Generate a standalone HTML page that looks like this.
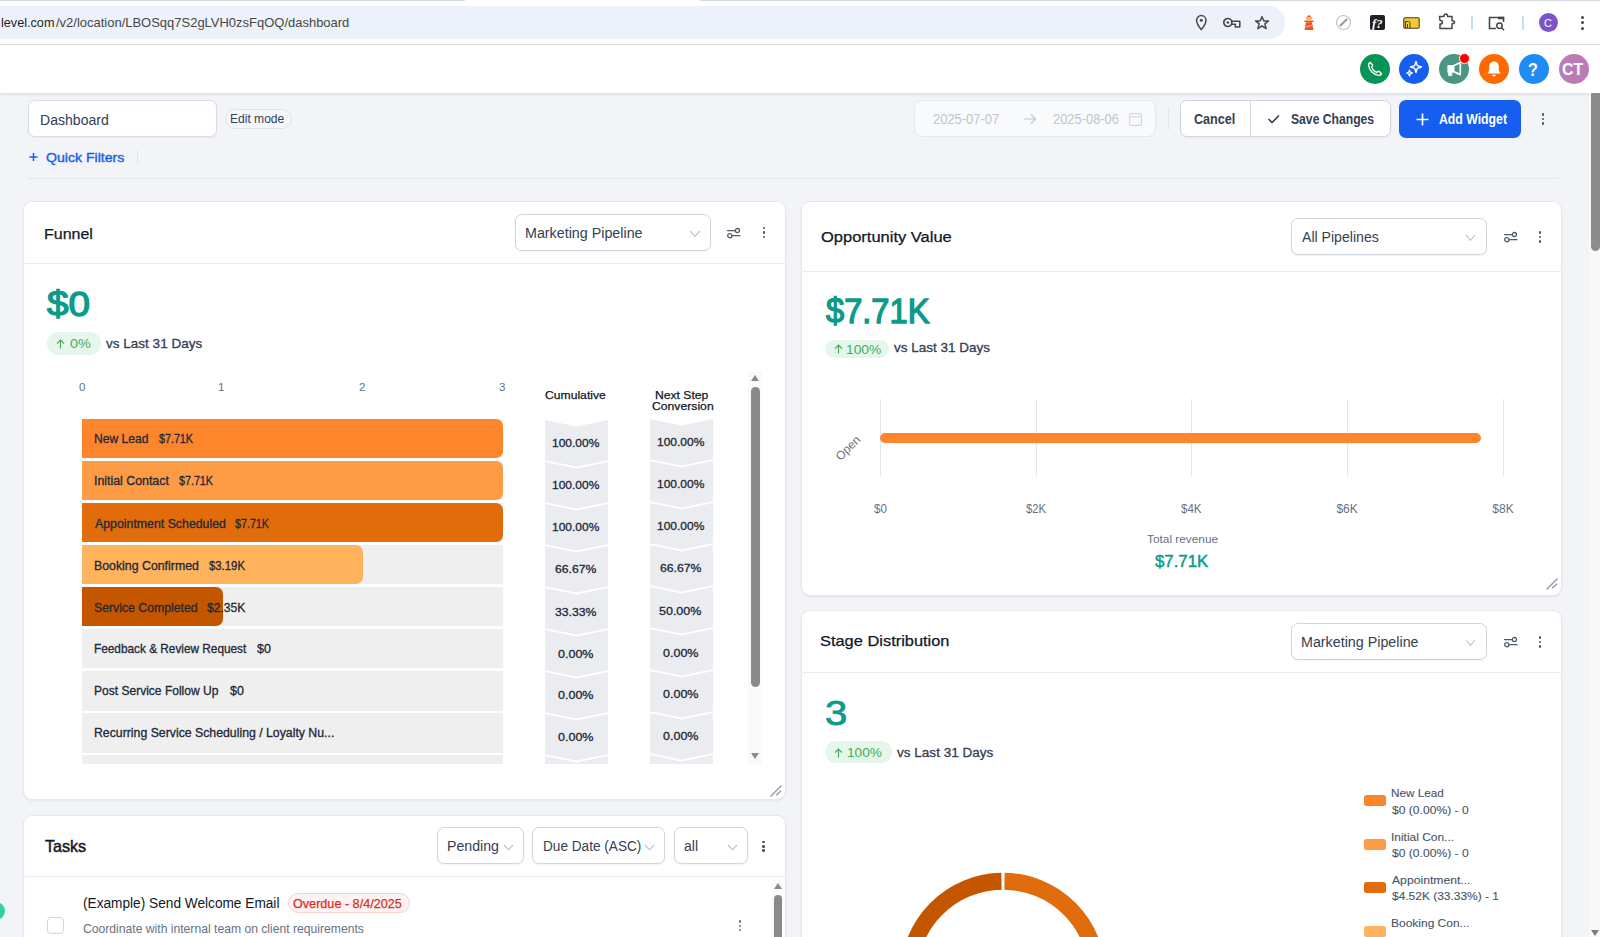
<!DOCTYPE html>
<html><head><meta charset="utf-8">
<style>
*{box-sizing:border-box;margin:0;padding:0}
html,body{width:1600px;height:937px;overflow:hidden}
body{position:relative;background:#f2f4f8;font-family:"Liberation Sans",sans-serif;color:#101828}
.a{position:absolute}
.t{position:absolute;white-space:nowrap;line-height:1}
.circ{position:absolute;width:30px;height:30px;border-radius:50%}
.card{position:absolute;background:#fff;border-radius:8px;box-shadow:0 0 0 1px #e4e7ec,0 1px 3px rgba(16,24,40,.13)}
.dd{position:absolute;border:1px solid #d0d5dd;border-radius:7px;background:#fff;box-shadow:0 1px 2px rgba(16,24,40,.06)}
.keb{position:absolute;width:3px}
.keb i{display:block;width:3px;height:3px;border-radius:50%;background:#475467;margin-bottom:2px}
</style></head><body>
<div class="a" style="left:0;top:0;width:1600px;height:45px;background:#fff"></div><div class="a" style="left:0;top:0;width:465px;height:1px;background:#d6dae0"></div><div class="a" style="left:700px;top:0;width:900px;height:1px;background:#d6dae0"></div><div class="a" style="left:0;top:44px;width:1600px;height:1px;background:#e1e3e6"></div><div class="a" style="left:0;top:6px;width:1285px;height:32.5px;background:#edf2fa;border-radius:0 16px 16px 0"></div><div class="t" style="left:0.50px;top:15.87px;font-size:13.15px;color:#1f1f1f;transform:scaleX(0.9630);transform-origin:0 0;">level.com</div><div class="t" style="left:56.00px;top:15.87px;font-size:13.15px;color:#474747;transform:scaleX(0.9874);transform-origin:0 0;">/v2/location/LBOSqq7S2gLVH0zsFqOQ/dashboard</div>
<svg class="a" style="left:1195px;top:14px" width="13" height="17" viewBox="0 0 13 17"><path d="M6.3 15.6C6.3 15.6 1.6 10.2 1.6 6.3A4.7 4.7 0 0 1 11 6.3C11 10.2 6.3 15.6 6.3 15.6Z" fill="none" stroke="#474747" stroke-width="1.5" stroke-linejoin="round"/><circle cx="6.3" cy="6.2" r="1.5" fill="#474747"/></svg>
<svg class="a" style="left:1222px;top:16px" width="20" height="14" viewBox="0 0 20 14"><circle cx="5.8" cy="6.5" r="4" fill="none" stroke="#474747" stroke-width="1.7"/><circle cx="5.8" cy="6.5" r="1.3" fill="#474747"/><path d="M9.8 5.3H17.2Q17.8 5.3 17.8 5.9V10.4Q17.8 11 17.2 11H13.3V8.2H9.8" fill="none" stroke="#474747" stroke-width="1.6" stroke-linejoin="round"/></svg>
<svg class="a" style="left:1254px;top:14.8px" width="16" height="16" viewBox="0 0 16 16"><path d="M8 1.8L9.9 6H14.5L10.8 8.9L12.2 13.6L8 10.8L3.8 13.6L5.2 8.9L1.5 6H6.1Z" fill="none" stroke="#474747" stroke-width="1.5" stroke-linejoin="round"/></svg>
<svg class="a" style="left:1302px;top:14px" width="14" height="17" viewBox="0 0 14 17"><path d="M7 0.8L9.5 3.5V5.5H4.5V3.5Z" fill="#f4511e"/><rect x="5.3" y="3.2" width="3.4" height="2.2" fill="#ffd740"/><path d="M2.5 6.5H11.5V8H2.5Z" fill="#f4511e"/><path d="M4 8.3H10L11.5 16H2.5Z" fill="#f4511e"/><path d="M3.5 12.5L10.5 10.5V11.8L3.3 13.8Z" fill="#ffab91"/></svg>
<svg class="a" style="left:1335px;top:14px" width="17" height="17" viewBox="0 0 17 17"><circle cx="8.5" cy="8.5" r="7" fill="none" stroke="#c4c4c4" stroke-width="1.2"/><path d="M5.5 11.5L11.5 5.5" stroke="#9e9e9e" stroke-width="2.2" stroke-linecap="round"/></svg>
<div class="a" style="left:1370px;top:15px;width:15px;height:15px;background:#202124;border-radius:2px"></div>
<svg class="a" style="left:1403px;top:17px" width="17" height="12" viewBox="0 0 17 12"><rect x="0.8" y="0.8" width="15.4" height="10.4" rx="1.2" fill="#f9c933" stroke="#3c3c3c" stroke-width="1.1"/><path d="M2.5 11V4.5H5.5C6.5 4.5 7 5 7 6V11M4.5 11V7" fill="none" stroke="#3c3c3c" stroke-width="1"/></svg>
<svg class="a" style="left:1438px;top:13px" width="18" height="17" viewBox="0 0 18 17"><path d="M1.5 3.5H6C6 2 6.8 1 7.8 1S9.6 2 9.6 3.5H14V7.8C15.5 7.8 16.5 8.5 16.5 9.3S15.5 10.8 14 10.8V15.5H2V11C3.5 11 4.5 10.2 4.5 9.2S3.5 7.5 2 7.5Z" fill="none" stroke="#474747" stroke-width="1.5" stroke-linejoin="round"/></svg>
<div class="a" style="left:1471px;top:16px;width:2px;height:14px;background:#c7dbf7"></div>
<svg class="a" style="left:1488px;top:15px" width="18" height="16" viewBox="0 0 18 16"><path d="M8 13.5H1.5V2.5H15.5V7" fill="none" stroke="#474747" stroke-width="1.6"/><rect x="10" y="1.8" width="6.2" height="2.5" fill="#474747"/><circle cx="11.5" cy="10.8" r="2.7" fill="none" stroke="#474747" stroke-width="1.5"/><path d="M13.5 12.8L16 15.3" stroke="#474747" stroke-width="1.6"/></svg>
<div class="a" style="left:1522px;top:16px;width:2px;height:14px;background:#c7dbf7"></div>
<div class="a" style="left:1538.5px;top:13px;width:19px;height:19px;border-radius:50%;background:#7b55c7"></div>
<div class="t" style="left:1372.00px;top:16.99px;font-size:13px;color:#fff;font-weight:bold;font-style:italic;font-family:'Liberation Serif',serif;transform:scaleX(0.9710);transform-origin:0 0;">f?</div><div class="t" style="left:1544.00px;top:17.72px;font-size:10.96px;color:#fff;">C</div><div class="a" style="left:1580.50px;top:16.00px;width:3px;height:3px;border-radius:50%;background:#474747"></div><div class="a" style="left:1580.50px;top:21.25px;width:3px;height:3px;border-radius:50%;background:#474747"></div><div class="a" style="left:1580.50px;top:26.50px;width:3px;height:3px;border-radius:50%;background:#474747"></div><div class="a" style="left:0;top:45px;width:1600px;height:48px;background:#fff;box-shadow:0 1px 4px rgba(16,24,40,.12)"></div><div class="circ" style="left:1359.8px;top:54px;background:#079455"></div><div class="circ" style="left:1399.3px;top:54px;background:#155eef"></div><div class="circ" style="left:1439.0px;top:54px;background:#4b9682"></div><div class="circ" style="left:1479.0px;top:54px;background:#ff6a00"></div><div class="circ" style="left:1519.0px;top:54px;background:#1e8cf4"></div><div class="circ" style="left:1558.7px;top:54px;background:#b97cb8"></div>
<svg class="a" style="left:1367px;top:61px" width="16" height="16" viewBox="0 0 16 16"><path d="M3.2 1.5C2.3 1.8 1.5 2.8 1.6 4C2 9.5 6.5 14 12 14.4C13.2 14.5 14.2 13.7 14.5 12.8L12.3 10.6C11.8 10.2 11.2 10.3 10.8 10.6L9.8 11.5C7.5 10.5 5.5 8.5 4.5 6.2L5.4 5.2C5.7 4.8 5.8 4.2 5.4 3.7Z" fill="none" stroke="#fff" stroke-width="1.4" stroke-linejoin="round"/></svg>
<svg class="a" style="left:1405px;top:60px" width="18" height="18" viewBox="0 0 18 18"><path d="M11 1.5L12.3 5.7L16.5 7L12.3 8.3L11 12.5L9.7 8.3L5.5 7L9.7 5.7Z" fill="none" stroke="#fff" stroke-width="1.4" stroke-linejoin="round"/><path d="M4.5 10L5.3 12.2L7.5 13L5.3 13.8L4.5 16L3.7 13.8L1.5 13L3.7 12.2Z" fill="none" stroke="#fff" stroke-width="1.3" stroke-linejoin="round"/></svg>
<svg class="a" style="left:1445px;top:60px" width="18" height="18" viewBox="0 0 18 18"><path d="M2.8 5.6H8.2V12.2H6.6L6.9 15.6H3.6L3.2 12.2H2.8Z" fill="#fff" stroke="#fff" stroke-width="0.8" stroke-linejoin="round"/><path d="M8.6 5.8L15.3 2.6V14.6L8.6 11.6Z" fill="#4b9682" stroke="#fff" stroke-width="1.7" stroke-linejoin="round"/></svg>
<div class="a" style="left:1458.7px;top:52.6px;width:11.4px;height:11.4px;border-radius:50%;background:#f00;border:1px solid #fff"></div>
<svg class="a" style="left:1486px;top:60px" width="16" height="18" viewBox="0 0 16 18"><path d="M8 1.5C5 1.5 3.2 3.8 3.2 6.8V10.5L1.5 13.5H14.5L12.8 10.5V6.8C12.8 3.8 11 1.5 8 1.5Z" fill="#fff"/><path d="M6 14.8A2 1.6 0 0 0 10 14.8Z" fill="#fff"/></svg>
<div class="t" style="left:1528.00px;top:61.92px;font-size:17.81px;color:#fff;font-weight:bold;transform:scaleX(0.9000);transform-origin:0 0;">?</div><div class="t" style="left:1562.00px;top:61.08px;font-size:16.44px;color:#fff;font-weight:bold;transform:scaleX(0.9602);transform-origin:0 0;">CT</div><div class="a" style="left:27.8px;top:100.2px;width:188.8px;height:37.2px;background:#fff;border:1px solid #d9dde4;border-radius:7px;box-shadow:0 1px 2px rgba(16,24,40,.05)"></div><div class="t" style="left:40.07px;top:111.84px;font-size:15.07px;color:#344054;transform:scaleX(0.9335);transform-origin:0 0;">Dashboard</div><div class="a" style="left:224.5px;top:109.3px;width:67.5px;height:20px;border:1px solid #dfe2e8;border-radius:10px;background:#f5f6f9"></div><div class="t" style="left:230.22px;top:112.96px;font-size:12.33px;color:#344054;transform:scaleX(0.9771);transform-origin:0 0;">Edit mode</div><svg class="a" style="left:29px;top:152px" width="9" height="10" viewBox="0 0 9 10"><path d="M4.5 1V9M0.5 5H8.5" stroke="#155eef" stroke-width="1.5"/></svg><div class="t" style="left:45.60px;top:151.12px;font-size:13.56px;color:#155eef;transform:scaleX(1.0411);transform-origin:0 0;-webkit-text-stroke:0.4px #155eef;">Quick Filters</div><div class="a" style="left:137px;top:150px;width:1px;height:14px;background:#e1e4ea"></div><div class="a" style="left:28px;top:178px;width:1530px;height:1px;background:#e3e6ec"></div><div class="a" style="left:913.8px;top:100.3px;width:242px;height:37.2px;background:#f9fafb;border:1px solid #e6e8ed;border-radius:8px"></div><div class="t" style="left:933.40px;top:111.73px;font-size:14.25px;color:#c1c5cc;transform:scaleX(0.9086);transform-origin:0 0;">2025-07-07</div><svg class="a" style="left:1023px;top:113px" width="14" height="12" viewBox="0 0 14 12"><path d="M1 6H12.5M8 1.5L12.5 6L8 10.5" fill="none" stroke="#c1c5cc" stroke-width="1.1"/></svg><div class="t" style="left:1053.00px;top:111.73px;font-size:14.25px;color:#c1c5cc;transform:scaleX(0.9045);transform-origin:0 0;">2025-08-06</div><svg class="a" style="left:1128.5px;top:112.5px" width="13" height="13" viewBox="0 0 13 13"><rect x="0.6" y="0.6" width="11.8" height="11.8" rx="1.5" fill="none" stroke="#d3d6dc" stroke-width="1.1"/><path d="M0.6 3.8H12.4" stroke="#d3d6dc" stroke-width="1.1"/></svg><div class="a" style="left:1168px;top:108px;width:1px;height:22px;background:#e4e7ec"></div><div class="a" style="left:1180px;top:100px;width:211px;height:37px;background:#fff;border:1px solid #d0d5dd;border-radius:7px;box-shadow:0 1px 2px rgba(16,24,40,.05)"></div><div class="a" style="left:1250px;top:101px;width:1px;height:35px;background:#d0d5dd"></div><div class="t" style="left:1194.00px;top:111.65px;font-size:14.11px;color:#344054;font-weight:bold;transform:scaleX(0.8931);transform-origin:0 0;">Cancel</div><svg class="a" style="left:1266.5px;top:113px" width="14" height="12" viewBox="0 0 14 12"><path d="M1.5 6L5 9.5L12 2.5" fill="none" stroke="#344054" stroke-width="1.6"/></svg><div class="t" style="left:1291.00px;top:111.65px;font-size:14.11px;color:#344054;font-weight:bold;transform:scaleX(0.8617);transform-origin:0 0;">Save Changes</div><div class="a" style="left:1399px;top:100px;width:121.5px;height:37.5px;background:#155eef;border-radius:7px"></div><svg class="a" style="left:1415.5px;top:112.5px" width="13" height="13" viewBox="0 0 13 13"><path d="M6.5 0.5V12.5M0.5 6.5H12.5" stroke="#fff" stroke-width="1.7"/></svg><div class="t" style="left:1438.50px;top:111.65px;font-size:14.11px;color:#fff;font-weight:bold;transform:scaleX(0.8689);transform-origin:0 0;">Add Widget</div><div class="a" style="left:1541.85px;top:113.35px;width:2.5px;height:2.5px;border-radius:50%;background:#475467"></div><div class="a" style="left:1541.85px;top:117.80px;width:2.5px;height:2.5px;border-radius:50%;background:#475467"></div><div class="a" style="left:1541.85px;top:122.25px;width:2.5px;height:2.5px;border-radius:50%;background:#475467"></div><div class="a" style="left:1588.5px;top:93px;width:11.5px;height:844px;background:#f8f8f8"></div><div class="a" style="left:1591.3px;top:93px;width:8.7px;height:158px;background:#8c8c8c;border-radius:0 0 4.5px 4.5px"></div><div class="a" style="left:1591px;top:929.5px;width:0;height:0;border-left:4.5px solid transparent;border-right:4.5px solid transparent;border-top:6px solid #7a7a7a"></div><div class="a" style="left:-13px;top:902.3px;width:18px;height:18px;border-radius:50%;background:#32d296"></div><div class="card" style="left:24.3px;top:202px;width:760.5px;height:597px"></div><div class="a" style="left:24.3px;top:263px;width:760.5px;height:1px;background:#eaecf0"></div><div class="t" style="left:43.74px;top:225.64px;font-size:15.07px;color:#101828;transform:scaleX(1.0624);transform-origin:0 0;-webkit-text-stroke:0.25px #101828;">Funnel</div><div class="dd" style="left:514.5px;top:214px;width:196px;height:37.2px"></div><div class="t" style="left:524.82px;top:225.91px;font-size:14.52px;color:#344054;transform:scaleX(0.9844);transform-origin:0 0;">Marketing Pipeline</div><svg class="a" style="left:688.5px;top:229.5px" width="12.0" height="7.300000000000011" viewBox="0 0 12.0 7.300000000000011"><path d="M1 1L6.0 6.300000000000011L11.0 1" fill="none" stroke="#b9bec7" stroke-width="1.1"/></svg><svg class="a" style="left:726px;top:226.6px" width="16" height="13" viewBox="0 0 16 13"><path d="M1.5 3.6H9.5M5.5 8.65H14" stroke="#4d5b6b" stroke-width="1.3" stroke-linecap="round"/><circle cx="11.4" cy="3.6" r="2.1" fill="#fff" stroke="#4d5b6b" stroke-width="1.3"/><circle cx="3.8" cy="8.65" r="2.1" fill="#fff" stroke="#4d5b6b" stroke-width="1.3"/></svg><div class="a" style="left:762.65px;top:226.95px;width:2.5px;height:2.5px;border-radius:50%;background:#475467"></div><div class="a" style="left:762.65px;top:231.40px;width:2.5px;height:2.5px;border-radius:50%;background:#475467"></div><div class="a" style="left:762.65px;top:235.85px;width:2.5px;height:2.5px;border-radius:50%;background:#475467"></div><div class="t" style="left:47.40px;top:286.31px;font-size:35.07px;color:#0c9a89;transform:scaleX(1.1039);transform-origin:0 0;-webkit-text-stroke:1.35px #0c9a89;">$0</div><div class="a" style="left:47px;top:332px;width:54.2px;height:23px;border-radius:12px;background:#e6f6ea"></div><svg class="a" style="left:56px;top:338.5px" width="9" height="10" viewBox="0 0 9 10"><path d="M4.5 9.5V1.2M1 4.7L4.5 1.2 8 4.7" fill="none" stroke="#3fae5e" stroke-width="1.2"/></svg><div class="t" style="left:69.60px;top:338.44px;font-size:12.47px;color:#3fae5e;transform:scaleX(1.1542);transform-origin:0 0;">0%</div><div class="t" style="left:105.60px;top:336.87px;font-size:13.15px;color:#344054;transform:scaleX(1.0296);transform-origin:0 0;-webkit-text-stroke:0.3px currentColor;">vs Last 31 Days</div><div class="t" style="left:79.00px;top:381.85px;font-size:11.51px;color:#667085;">0</div><div class="t" style="left:218.00px;top:381.85px;font-size:11.51px;color:#667085;">1</div><div class="t" style="left:359.00px;top:381.85px;font-size:11.51px;color:#667085;">2</div><div class="t" style="left:499.00px;top:381.85px;font-size:11.51px;color:#667085;">3</div><div class="t" style="left:545.00px;top:389.14px;font-size:11.64px;color:#101828;transform:scaleX(1.0454);transform-origin:0 0;-webkit-text-stroke:0.25px #101828;">Cumulative</div><div class="t" style="left:655.00px;top:389.14px;font-size:11.64px;color:#101828;transform:scaleX(1.0439);transform-origin:0 0;-webkit-text-stroke:0.25px #101828;">Next Step</div><div class="t" style="left:652.00px;top:400.14px;font-size:11.64px;color:#101828;transform:scaleX(1.0491);transform-origin:0 0;-webkit-text-stroke:0.25px #101828;">Conversion</div><div class="a" style="left:0;top:0;width:1600px;height:764px;overflow:hidden"><div class="a" style="left:82.2px;top:418.50px;width:421px;height:39.6px;background:#efefef"></div><div class="a" style="left:82.2px;top:418.50px;width:421.0px;height:39.6px;background:#fd862c;border-radius:0 7px 7px 0"></div><div class="t" style="left:94.00px;top:434.31px;font-size:11.92px;color:#1d2939;transform:scaleX(1.0143);transform-origin:0 0;-webkit-text-stroke:0.3px currentColor;">New Lead</div><div class="t" style="left:158.90px;top:434.31px;font-size:11.92px;color:#1d2939;transform:scaleX(0.8996);transform-origin:0 0;-webkit-text-stroke:0.3px currentColor;">$7.71K</div><svg class="a" style="left:545.1px;top:419.50px" width="63" height="47" viewBox="0 0 63 47"><path d="M0 0L31.5 6.5L63 0V40.2L31.5 46.4L0 40.2Z" fill="#eaecf0"/></svg><div class="t" style="left:552.20px;top:436.94px;font-size:11.64px;color:#1d2939;transform:scaleX(1.0317);transform-origin:0 0;-webkit-text-stroke:0.3px currentColor;">100.00%</div><svg class="a" style="left:650px;top:418.50px" width="63" height="47" viewBox="0 0 63 47"><path d="M0 0L31.5 6.5L63 0V40.2L31.5 46.4L0 40.2Z" fill="#eaecf0"/></svg><div class="t" style="left:657.00px;top:435.94px;font-size:11.64px;color:#1d2939;transform:scaleX(1.0317);transform-origin:0 0;-webkit-text-stroke:0.3px currentColor;">100.00%</div><div class="a" style="left:82.2px;top:460.58px;width:421px;height:39.6px;background:#efefef"></div><div class="a" style="left:82.2px;top:460.58px;width:421.0px;height:39.6px;background:#fe9b45;border-radius:0 7px 7px 0"></div><div class="t" style="left:93.96px;top:476.47px;font-size:11.92px;color:#1d2939;transform:scaleX(1.0372);transform-origin:0 0;-webkit-text-stroke:0.3px currentColor;">Initial Contact</div><div class="t" style="left:179.40px;top:476.47px;font-size:11.92px;color:#1d2939;transform:scaleX(0.8996);transform-origin:0 0;-webkit-text-stroke:0.3px currentColor;">$7.71K</div><svg class="a" style="left:545.1px;top:461.58px" width="63" height="47" viewBox="0 0 63 47"><path d="M0 0L31.5 6.5L63 0V40.2L31.5 46.4L0 40.2Z" fill="#eaecf0"/></svg><div class="t" style="left:552.20px;top:479.10px;font-size:11.64px;color:#1d2939;transform:scaleX(1.0317);transform-origin:0 0;-webkit-text-stroke:0.3px currentColor;">100.00%</div><svg class="a" style="left:650px;top:460.58px" width="63" height="47" viewBox="0 0 63 47"><path d="M0 0L31.5 6.5L63 0V40.2L31.5 46.4L0 40.2Z" fill="#eaecf0"/></svg><div class="t" style="left:657.00px;top:478.10px;font-size:11.64px;color:#1d2939;transform:scaleX(1.0317);transform-origin:0 0;-webkit-text-stroke:0.3px currentColor;">100.00%</div><div class="a" style="left:82.2px;top:502.66px;width:421px;height:39.6px;background:#efefef"></div><div class="a" style="left:82.2px;top:502.66px;width:421.0px;height:39.6px;background:#e06c0b;border-radius:0 7px 7px 0"></div><div class="t" style="left:95.00px;top:518.63px;font-size:11.92px;color:#1d2939;transform:scaleX(1.0353);transform-origin:0 0;-webkit-text-stroke:0.3px currentColor;">Appointment Scheduled</div><div class="t" style="left:234.90px;top:518.63px;font-size:11.92px;color:#1d2939;transform:scaleX(0.8996);transform-origin:0 0;-webkit-text-stroke:0.3px currentColor;">$7.71K</div><svg class="a" style="left:545.1px;top:503.66px" width="63" height="47" viewBox="0 0 63 47"><path d="M0 0L31.5 6.5L63 0V40.2L31.5 46.4L0 40.2Z" fill="#eaecf0"/></svg><div class="t" style="left:552.20px;top:521.26px;font-size:11.64px;color:#1d2939;transform:scaleX(1.0317);transform-origin:0 0;-webkit-text-stroke:0.3px currentColor;">100.00%</div><svg class="a" style="left:650px;top:502.66px" width="63" height="47" viewBox="0 0 63 47"><path d="M0 0L31.5 6.5L63 0V40.2L31.5 46.4L0 40.2Z" fill="#eaecf0"/></svg><div class="t" style="left:657.00px;top:520.26px;font-size:11.64px;color:#1d2939;transform:scaleX(1.0317);transform-origin:0 0;-webkit-text-stroke:0.3px currentColor;">100.00%</div><div class="a" style="left:82.2px;top:544.74px;width:421px;height:39.6px;background:#efefef"></div><div class="a" style="left:82.2px;top:544.74px;width:281.0px;height:39.6px;background:#feb35c;border-radius:0 7px 7px 0"></div><div class="t" style="left:94.00px;top:560.79px;font-size:11.92px;color:#1d2939;transform:scaleX(1.0359);transform-origin:0 0;-webkit-text-stroke:0.3px currentColor;">Booking Confirmed</div><div class="t" style="left:208.90px;top:560.79px;font-size:11.92px;color:#1d2939;transform:scaleX(0.9525);transform-origin:0 0;-webkit-text-stroke:0.3px currentColor;">$3.19K</div><svg class="a" style="left:545.1px;top:545.74px" width="63" height="47" viewBox="0 0 63 47"><path d="M0 0L31.5 6.5L63 0V40.2L31.5 46.4L0 40.2Z" fill="#eaecf0"/></svg><div class="t" style="left:555.20px;top:563.42px;font-size:11.64px;color:#1d2939;transform:scaleX(1.0488);transform-origin:0 0;-webkit-text-stroke:0.3px currentColor;">66.67%</div><svg class="a" style="left:650px;top:544.74px" width="63" height="47" viewBox="0 0 63 47"><path d="M0 0L31.5 6.5L63 0V40.2L31.5 46.4L0 40.2Z" fill="#eaecf0"/></svg><div class="t" style="left:660.00px;top:562.42px;font-size:11.64px;color:#1d2939;transform:scaleX(1.0488);transform-origin:0 0;-webkit-text-stroke:0.3px currentColor;">66.67%</div><div class="a" style="left:82.2px;top:586.82px;width:421px;height:39.6px;background:#efefef"></div><div class="a" style="left:82.2px;top:586.82px;width:141.0px;height:39.6px;background:#c55600;border-radius:0 7px 7px 0"></div><div class="t" style="left:94.00px;top:602.95px;font-size:11.92px;color:#1d2939;transform:scaleX(1.0304);transform-origin:0 0;-webkit-text-stroke:0.3px currentColor;">Service Completed</div><div class="t" style="left:207.40px;top:602.95px;font-size:11.92px;color:#1d2939;transform:scaleX(1.0187);transform-origin:0 0;-webkit-text-stroke:0.3px currentColor;">$2.35K</div><svg class="a" style="left:545.1px;top:587.82px" width="63" height="47" viewBox="0 0 63 47"><path d="M0 0L31.5 6.5L63 0V40.2L31.5 46.4L0 40.2Z" fill="#eaecf0"/></svg><div class="t" style="left:555.20px;top:605.58px;font-size:11.64px;color:#1d2939;transform:scaleX(1.0488);transform-origin:0 0;-webkit-text-stroke:0.3px currentColor;">33.33%</div><svg class="a" style="left:650px;top:586.82px" width="63" height="47" viewBox="0 0 63 47"><path d="M0 0L31.5 6.5L63 0V40.2L31.5 46.4L0 40.2Z" fill="#eaecf0"/></svg><div class="t" style="left:659.00px;top:604.58px;font-size:11.64px;color:#1d2939;transform:scaleX(1.0744);transform-origin:0 0;-webkit-text-stroke:0.3px currentColor;">50.00%</div><div class="a" style="left:82.2px;top:628.90px;width:421px;height:39.6px;background:#efefef"></div><div class="t" style="left:94.00px;top:644.11px;font-size:11.92px;color:#1d2939;transform:scaleX(0.9920);transform-origin:0 0;-webkit-text-stroke:0.3px currentColor;">Feedback &amp; Review Request</div><div class="t" style="left:257.40px;top:644.11px;font-size:11.92px;color:#1d2939;transform:scaleX(1.0461);transform-origin:0 0;-webkit-text-stroke:0.3px currentColor;">$0</div><svg class="a" style="left:545.1px;top:629.90px" width="63" height="47" viewBox="0 0 63 47"><path d="M0 0L31.5 6.5L63 0V40.2L31.5 46.4L0 40.2Z" fill="#eaecf0"/></svg><div class="t" style="left:558.10px;top:647.74px;font-size:11.64px;color:#1d2939;transform:scaleX(1.0758);transform-origin:0 0;-webkit-text-stroke:0.3px currentColor;">0.00%</div><svg class="a" style="left:650px;top:628.90px" width="63" height="47" viewBox="0 0 63 47"><path d="M0 0L31.5 6.5L63 0V40.2L31.5 46.4L0 40.2Z" fill="#eaecf0"/></svg><div class="t" style="left:662.90px;top:646.74px;font-size:11.64px;color:#1d2939;transform:scaleX(1.0758);transform-origin:0 0;-webkit-text-stroke:0.3px currentColor;">0.00%</div><div class="a" style="left:82.2px;top:670.98px;width:421px;height:39.6px;background:#efefef"></div><div class="t" style="left:94.00px;top:686.27px;font-size:11.92px;color:#1d2939;transform:scaleX(1.0105);transform-origin:0 0;-webkit-text-stroke:0.3px currentColor;">Post Service Follow Up</div><div class="t" style="left:229.90px;top:686.27px;font-size:11.92px;color:#1d2939;transform:scaleX(1.0461);transform-origin:0 0;-webkit-text-stroke:0.3px currentColor;">$0</div><svg class="a" style="left:545.1px;top:671.98px" width="63" height="47" viewBox="0 0 63 47"><path d="M0 0L31.5 6.5L63 0V40.2L31.5 46.4L0 40.2Z" fill="#eaecf0"/></svg><div class="t" style="left:558.10px;top:688.90px;font-size:11.64px;color:#1d2939;transform:scaleX(1.0758);transform-origin:0 0;-webkit-text-stroke:0.3px currentColor;">0.00%</div><svg class="a" style="left:650px;top:670.98px" width="63" height="47" viewBox="0 0 63 47"><path d="M0 0L31.5 6.5L63 0V40.2L31.5 46.4L0 40.2Z" fill="#eaecf0"/></svg><div class="t" style="left:662.90px;top:687.90px;font-size:11.64px;color:#1d2939;transform:scaleX(1.0758);transform-origin:0 0;-webkit-text-stroke:0.3px currentColor;">0.00%</div><div class="a" style="left:82.2px;top:713.06px;width:421px;height:39.6px;background:#efefef"></div><div class="t" style="left:94.00px;top:728.43px;font-size:11.92px;color:#1d2939;transform:scaleX(1.0316);transform-origin:0 0;-webkit-text-stroke:0.3px currentColor;">Recurring Service Scheduling / Loyalty Nu...</div><svg class="a" style="left:545.1px;top:714.06px" width="63" height="47" viewBox="0 0 63 47"><path d="M0 0L31.5 6.5L63 0V40.2L31.5 46.4L0 40.2Z" fill="#eaecf0"/></svg><div class="t" style="left:558.10px;top:731.06px;font-size:11.64px;color:#1d2939;transform:scaleX(1.0758);transform-origin:0 0;-webkit-text-stroke:0.3px currentColor;">0.00%</div><svg class="a" style="left:650px;top:713.06px" width="63" height="47" viewBox="0 0 63 47"><path d="M0 0L31.5 6.5L63 0V40.2L31.5 46.4L0 40.2Z" fill="#eaecf0"/></svg><div class="t" style="left:662.90px;top:730.06px;font-size:11.64px;color:#1d2939;transform:scaleX(1.0758);transform-origin:0 0;-webkit-text-stroke:0.3px currentColor;">0.00%</div><div class="a" style="left:82.2px;top:755.14px;width:421px;height:39.6px;background:#efefef"></div><svg class="a" style="left:545.1px;top:756.14px" width="63" height="47" viewBox="0 0 63 47"><path d="M0 0L31.5 6.5L63 0V40.2L31.5 46.4L0 40.2Z" fill="#eaecf0"/></svg><svg class="a" style="left:650px;top:755.14px" width="63" height="47" viewBox="0 0 63 47"><path d="M0 0L31.5 6.5L63 0V40.2L31.5 46.4L0 40.2Z" fill="#eaecf0"/></svg></div><div class="a" style="left:748px;top:372px;width:14px;height:392px;background:#fafafa"></div><div class="a" style="left:750.5px;top:375.3px;width:0;height:0;border-left:4.5px solid transparent;border-right:4.5px solid transparent;border-bottom:6px solid #8a8a8a"></div><div class="a" style="left:750.5px;top:386.8px;width:9px;height:300px;background:#8a8a8a;border-radius:4.5px"></div><div class="a" style="left:750.5px;top:753.3px;width:0;height:0;border-left:4.5px solid transparent;border-right:4.5px solid transparent;border-top:6px solid #8a8a8a"></div><svg class="a" style="left:769px;top:784px" width="14" height="14" viewBox="0 0 14 14"><path d="M1.5 12.5L12.5 1.5M7.3 11.2L12 6.7" stroke="#8d96a5" stroke-width="1.25"/></svg><div class="card" style="left:24px;top:816.2px;width:761px;height:200px"></div><div class="a" style="left:24px;top:876.3px;width:761px;height:1px;background:#eaecf0"></div><div class="t" style="left:44.50px;top:838.66px;font-size:15.75px;color:#101828;transform:scaleX(1.0214);transform-origin:0 0;-webkit-text-stroke:0.45px #101828;">Tasks</div><div class="dd" style="left:436.75px;top:827.4px;width:87.25px;height:37.1px"></div><div class="t" style="left:447.16px;top:838.24px;font-size:15.07px;color:#344054;transform:scaleX(0.9388);transform-origin:0 0;">Pending</div><svg class="a" style="left:503px;top:844px" width="11" height="6.7999999999999545" viewBox="0 0 11 6.7999999999999545"><path d="M1 1L5.5 5.7999999999999545L10 1" fill="none" stroke="#b9bec7" stroke-width="1.1"/></svg><div class="dd" style="left:532.4px;top:827.4px;width:132.60px;height:37.1px"></div><div class="t" style="left:542.50px;top:838.24px;font-size:15.07px;color:#344054;transform:scaleX(0.9035);transform-origin:0 0;">Due Date (ASC)</div><svg class="a" style="left:644px;top:844px" width="11" height="6.7999999999999545" viewBox="0 0 11 6.7999999999999545"><path d="M1 1L5.5 5.7999999999999545L10 1" fill="none" stroke="#b9bec7" stroke-width="1.1"/></svg><div class="dd" style="left:673.5px;top:827.4px;width:74.90px;height:37.1px"></div><div class="t" style="left:683.60px;top:838.24px;font-size:15.07px;color:#344054;transform:scaleX(0.9305);transform-origin:0 0;">all</div><svg class="a" style="left:727px;top:844px" width="11" height="6.7999999999999545" viewBox="0 0 11 6.7999999999999545"><path d="M1 1L5.5 5.7999999999999545L10 1" fill="none" stroke="#b9bec7" stroke-width="1.1"/></svg><div class="a" style="left:762.45px;top:840.55px;width:2.5px;height:2.5px;border-radius:50%;background:#475467"></div><div class="a" style="left:762.45px;top:845.00px;width:2.5px;height:2.5px;border-radius:50%;background:#475467"></div><div class="a" style="left:762.45px;top:849.45px;width:2.5px;height:2.5px;border-radius:50%;background:#475467"></div><div class="a" style="left:47.3px;top:917px;width:17px;height:17px;border:1.2px solid #d0d5dd;border-radius:4px;background:#fff"></div><div class="t" style="left:82.50px;top:895.82px;font-size:14.38px;color:#101828;transform:scaleX(0.9506);transform-origin:0 0;">(Example) Send Welcome Email</div><div class="a" style="left:288px;top:893.3px;width:121.5px;height:19.7px;border:1px solid #fdd0cb;border-radius:10px;background:#fef3f2"></div><div class="t" style="left:293.00px;top:896.98px;font-size:13.01px;color:#d92d20;transform:scaleX(0.9706);transform-origin:0 0;-webkit-text-stroke:0.25px currentColor;">Overdue - 8/4/2025</div><div class="t" style="left:82.50px;top:923.06px;font-size:12.33px;color:#667085;transform:scaleX(0.9854);transform-origin:0 0;">Coordinate with internal team on client requirements</div><div class="a" style="left:738.90px;top:920.40px;width:2.2px;height:2.2px;border-radius:50%;background:#667085"></div><div class="a" style="left:738.90px;top:924.75px;width:2.2px;height:2.2px;border-radius:50%;background:#667085"></div><div class="a" style="left:738.90px;top:929.10px;width:2.2px;height:2.2px;border-radius:50%;background:#667085"></div><div class="a" style="left:772px;top:880px;width:11px;height:60px;background:#fafafa"></div><div class="a" style="left:773.8px;top:882.5px;width:0;height:0;border-left:4.2px solid transparent;border-right:4.2px solid transparent;border-bottom:6px solid #8a8a8a"></div><div class="a" style="left:774px;top:895px;width:8px;height:60px;background:#8a8a8a;border-radius:4px"></div><div class="card" style="left:801.8px;top:202.2px;width:759.6px;height:393px"></div><div class="a" style="left:801.3px;top:270.5px;width:760px;height:1px;background:#eaecf0"></div><div class="t" style="left:820.80px;top:229.88px;font-size:14.79px;color:#101828;transform:scaleX(1.1153);transform-origin:0 0;-webkit-text-stroke:0.25px #101828;">Opportunity Value</div><div class="dd" style="left:1290.9px;top:218px;width:196px;height:37.2px"></div><div class="t" style="left:1301.80px;top:229.82px;font-size:14.38px;color:#344054;transform:scaleX(0.9806);transform-origin:0 0;">All Pipelines</div><svg class="a" style="left:1465.4px;top:233.5px" width="11.0" height="7.300000000000011" viewBox="0 0 11.0 7.300000000000011"><path d="M1 1L5.5 6.300000000000011L10.0 1" fill="none" stroke="#b9bec7" stroke-width="1.1"/></svg><svg class="a" style="left:1502.7px;top:230.9px" width="16" height="13" viewBox="0 0 16 13"><path d="M1.5 3.6H9.5M5.5 8.65H14" stroke="#4d5b6b" stroke-width="1.3" stroke-linecap="round"/><circle cx="11.4" cy="3.6" r="2.1" fill="#fff" stroke="#4d5b6b" stroke-width="1.3"/><circle cx="3.8" cy="8.65" r="2.1" fill="#fff" stroke="#4d5b6b" stroke-width="1.3"/></svg><div class="a" style="left:1538.95px;top:231.35px;width:2.5px;height:2.5px;border-radius:50%;background:#475467"></div><div class="a" style="left:1538.95px;top:235.80px;width:2.5px;height:2.5px;border-radius:50%;background:#475467"></div><div class="a" style="left:1538.95px;top:240.25px;width:2.5px;height:2.5px;border-radius:50%;background:#475467"></div><div class="t" style="left:825.60px;top:294.40px;font-size:34.25px;color:#0c9a89;transform:scaleX(0.9530);transform-origin:0 0;-webkit-text-stroke:1.35px #0c9a89;">$7.71K</div><div class="a" style="left:824.8px;top:340px;width:64.7px;height:18.3px;border-radius:9px;background:#e6f6ea"></div><svg class="a" style="left:833.5px;top:344px" width="9" height="10" viewBox="0 0 9 10"><path d="M4.5 9.5V1.2M1 4.7L4.5 1.2 8 4.7" fill="none" stroke="#3fae5e" stroke-width="1.2"/></svg><div class="t" style="left:846.35px;top:342.67px;font-size:13.15px;color:#3fae5e;transform:scaleX(1.0509);transform-origin:0 0;">100%</div><div class="t" style="left:894.00px;top:341.07px;font-size:13.15px;color:#344054;transform:scaleX(1.0265);transform-origin:0 0;-webkit-text-stroke:0.3px currentColor;">vs Last 31 Days</div><div class="a" style="left:879.5px;top:399.1px;width:1px;height:77.7px;background:#e2e6ef"></div><div class="a" style="left:1035.5px;top:399.1px;width:1px;height:77.7px;background:#e2e6ef"></div><div class="a" style="left:1191.4px;top:399.1px;width:1px;height:77.7px;background:#e2e6ef"></div><div class="a" style="left:1347.3px;top:399.1px;width:1px;height:77.7px;background:#e2e6ef"></div><div class="a" style="left:1503.3px;top:399.1px;width:1px;height:77.7px;background:#e2e6ef"></div><div class="a" style="left:880px;top:433.4px;width:601px;height:9.5px;border-radius:5px;background:#fd862c"></div><div class="t" style="left:832.5px;top:442px;width:30px;text-align:center;font-size:12px;color:#667085;transform:rotate(-45deg);transform-origin:50% 50%">Open</div><div class="t" style="left:873.60px;top:503.35px;font-size:11.99px;color:#667085;transform:scaleX(0.9806);transform-origin:0 0;">$0</div><div class="t" style="left:1025.70px;top:503.35px;font-size:11.99px;color:#667085;transform:scaleX(0.9470);transform-origin:0 0;">$2K</div><div class="t" style="left:1181.20px;top:503.35px;font-size:11.99px;color:#667085;transform:scaleX(0.9658);transform-origin:0 0;">$4K</div><div class="t" style="left:1336.45px;top:503.35px;font-size:11.99px;color:#667085;">$6K</div><div class="t" style="left:1492.35px;top:503.35px;font-size:11.99px;color:#667085;">$8K</div><div class="t" style="left:1146.60px;top:534.05px;font-size:11.51px;color:#667085;transform:scaleX(1.0299);transform-origin:0 0;">Total revenue</div><div class="t" style="left:1154.60px;top:552.52px;font-size:16.16px;color:#0c9a89;transform:scaleX(1.0402);transform-origin:0 0;-webkit-text-stroke:0.45px #0c9a89;">$7.71K</div><svg class="a" style="left:1545px;top:577px" width="14" height="14" viewBox="0 0 14 14"><path d="M1.5 12.5L12.5 1.5M7.3 11.2L12 6.7" stroke="#8d96a5" stroke-width="1.25"/></svg><div class="card" style="left:801.8px;top:611px;width:759.6px;height:400px"></div><div class="a" style="left:801.3px;top:672px;width:760px;height:1px;background:#eaecf0"></div><div class="t" style="left:820.20px;top:633.32px;font-size:15.21px;color:#101828;transform:scaleX(1.0791);transform-origin:0 0;-webkit-text-stroke:0.25px #101828;">Stage Distribution</div><div class="dd" style="left:1290.9px;top:623px;width:196px;height:37.2px"></div><div class="t" style="left:1300.82px;top:634.71px;font-size:14.52px;color:#344054;transform:scaleX(0.9844);transform-origin:0 0;">Marketing Pipeline</div><svg class="a" style="left:1465.4px;top:638.5px" width="11.0" height="7.2999999999999545" viewBox="0 0 11.0 7.2999999999999545"><path d="M1 1L5.5 6.2999999999999545L10.0 1" fill="none" stroke="#b9bec7" stroke-width="1.1"/></svg><svg class="a" style="left:1502.7px;top:635.9px" width="16" height="13" viewBox="0 0 16 13"><path d="M1.5 3.6H9.5M5.5 8.65H14" stroke="#4d5b6b" stroke-width="1.3" stroke-linecap="round"/><circle cx="11.4" cy="3.6" r="2.1" fill="#fff" stroke="#4d5b6b" stroke-width="1.3"/><circle cx="3.8" cy="8.65" r="2.1" fill="#fff" stroke="#4d5b6b" stroke-width="1.3"/></svg><div class="a" style="left:1538.95px;top:636.35px;width:2.5px;height:2.5px;border-radius:50%;background:#475467"></div><div class="a" style="left:1538.95px;top:640.80px;width:2.5px;height:2.5px;border-radius:50%;background:#475467"></div><div class="a" style="left:1538.95px;top:645.25px;width:2.5px;height:2.5px;border-radius:50%;background:#475467"></div><div class="t" style="left:824.65px;top:696.42px;font-size:34.93px;color:#0c9a89;transform:scaleX(1.1471);transform-origin:0 0;-webkit-text-stroke:0.8px #0c9a89;">3</div><div class="a" style="left:825px;top:741.3px;width:66.6px;height:22.2px;border-radius:11px;background:#e6f6ea"></div><svg class="a" style="left:833.5px;top:747.5px" width="9" height="10" viewBox="0 0 9 10"><path d="M4.5 9.5V1.2M1 4.7L4.5 1.2 8 4.7" fill="none" stroke="#3fae5e" stroke-width="1.2"/></svg><div class="t" style="left:847.00px;top:747.29px;font-size:12.88px;color:#3fae5e;transform:scaleX(1.0621);transform-origin:0 0;">100%</div><div class="t" style="left:896.50px;top:746.07px;font-size:13.15px;color:#344054;transform:scaleX(1.0307);transform-origin:0 0;-webkit-text-stroke:0.3px currentColor;">vs Last 31 Days</div><div class="a" style="left:1364px;top:795.0px;width:22px;height:11.3px;border-radius:2.5px;background:#fd862c"></div><div class="t" style="left:1390.80px;top:787.56px;font-size:10.68px;color:#475467;transform:scaleX(1.0973);transform-origin:0 0;-webkit-text-stroke:0.1px currentColor;">New Lead</div><div class="t" style="left:1391.80px;top:804.96px;font-size:10.68px;color:#475467;transform:scaleX(1.1346);transform-origin:0 0;-webkit-text-stroke:0.1px currentColor;">$0 (0.00%) - 0</div><div class="a" style="left:1364px;top:838.6px;width:22px;height:11.3px;border-radius:2.5px;background:#fe9b45"></div><div class="t" style="left:1390.80px;top:831.76px;font-size:10.68px;color:#475467;transform:scaleX(1.1194);transform-origin:0 0;-webkit-text-stroke:0.1px currentColor;">Initial Con...</div><div class="t" style="left:1391.80px;top:848.16px;font-size:10.68px;color:#475467;transform:scaleX(1.1346);transform-origin:0 0;-webkit-text-stroke:0.1px currentColor;">$0 (0.00%) - 0</div><div class="a" style="left:1364px;top:882.2px;width:22px;height:11.3px;border-radius:2.5px;background:#e06c0b"></div><div class="t" style="left:1391.80px;top:874.96px;font-size:10.68px;color:#475467;transform:scaleX(1.1408);transform-origin:0 0;-webkit-text-stroke:0.1px currentColor;">Appointment...</div><div class="t" style="left:1391.80px;top:891.36px;font-size:10.68px;color:#475467;transform:scaleX(1.1195);transform-origin:0 0;-webkit-text-stroke:0.1px currentColor;">$4.52K (33.33%) - 1</div><div class="a" style="left:1364px;top:925.8px;width:22px;height:11.3px;border-radius:2.5px;background:#feb35c"></div><div class="t" style="left:1390.80px;top:918.16px;font-size:10.68px;color:#475467;transform:scaleX(1.1226);transform-origin:0 0;-webkit-text-stroke:0.1px currentColor;">Booking Con...</div><div class="t" style="left:1391.80px;top:935.56px;font-size:10.68px;color:#475467;transform:scaleX(1.1195);transform-origin:0 0;-webkit-text-stroke:0.1px currentColor;">$3.19K (33.33%) - 1</div><svg class="a" style="left:880px;top:860px" width="250" height="77" viewBox="0 0 250 77">
  <path d="M 121.5 21.26 A 94.25 94.25 0 0 0 28.75 115.5" fill="none" stroke="#c55600" stroke-width="16.9"/>
  <path d="M 124.5 21.26 A 94.25 94.25 0 0 1 217.25 115.5" fill="none" stroke="#e06c0b" stroke-width="16.9"/>
</svg></body></html>
